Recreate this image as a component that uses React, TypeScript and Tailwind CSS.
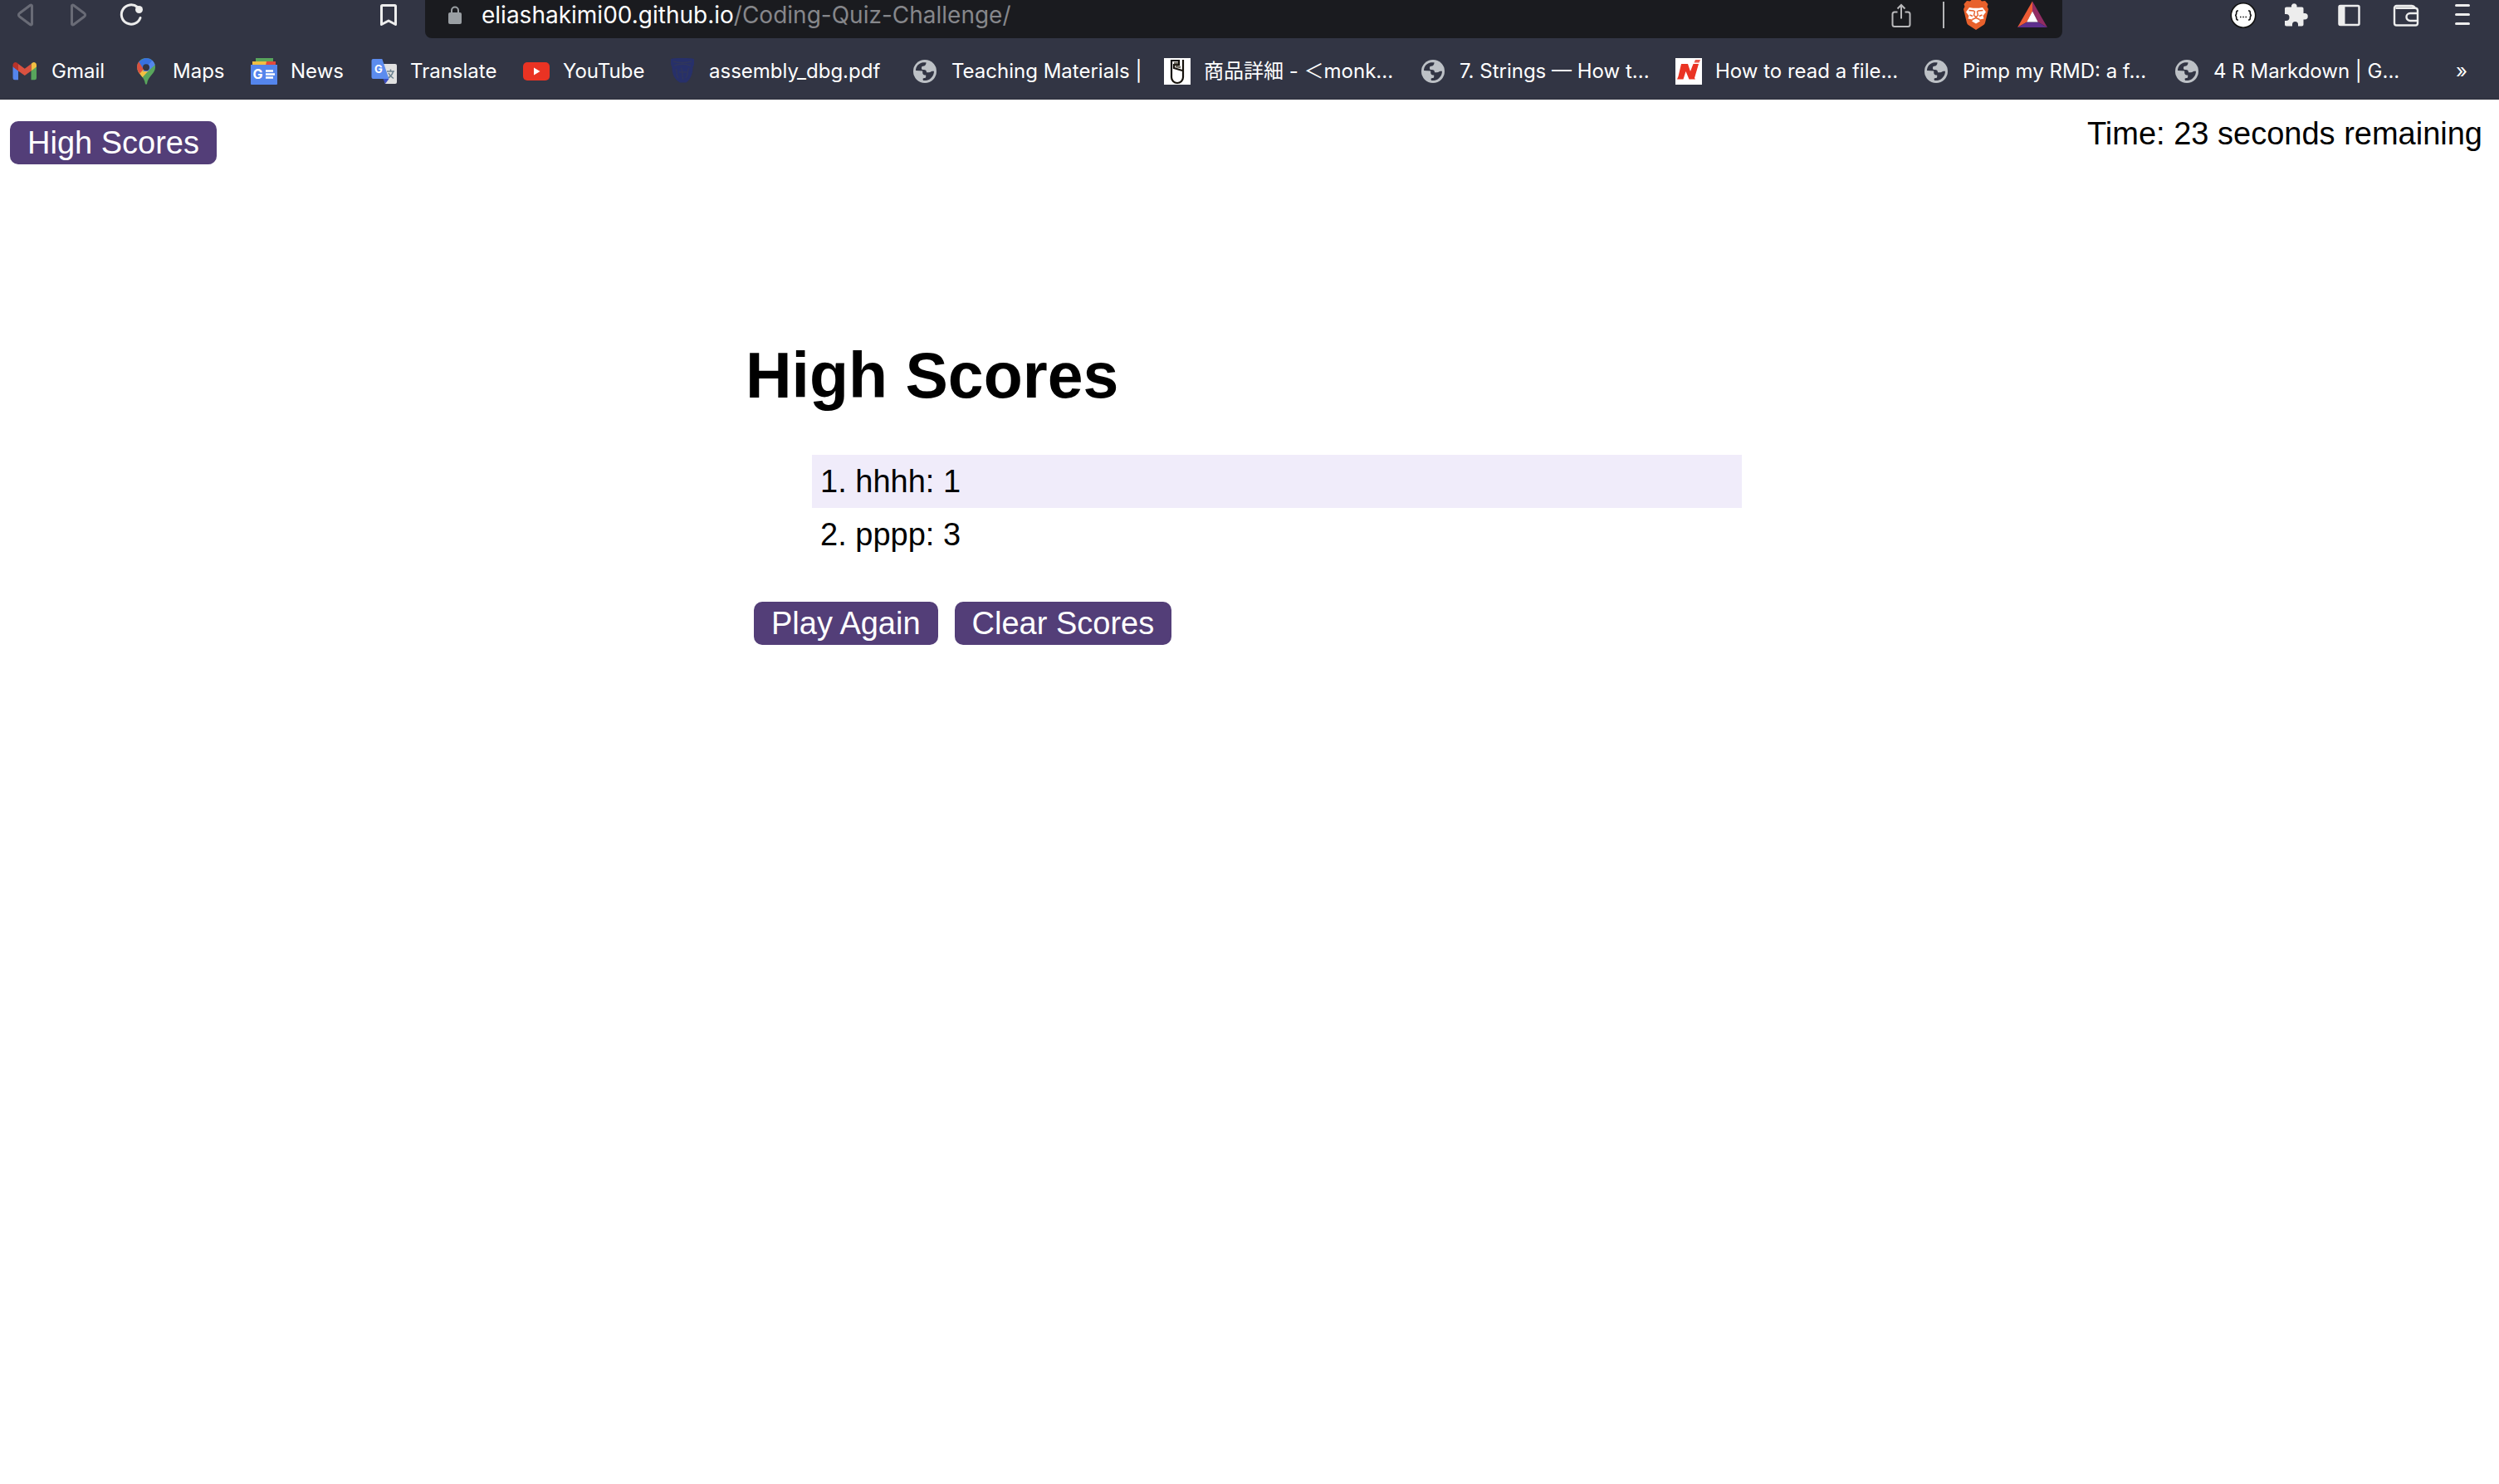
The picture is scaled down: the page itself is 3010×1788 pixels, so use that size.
import type { ReactNode } from "react";

type IconProps = { children: ReactNode; className?: string };

/** 32x36 drawing area used by every icon of the address row. */
function BarIcon({ children, className = "w-8" }: IconProps) {
  return (
    <svg viewBox="0 0 32 36" className={`h-9 shrink-0 ${className}`} fill="none" aria-hidden="true">
      {children}
    </svg>
  );
}

/** 32x32 favicon used by every bookmark. */
function Favicon({ children }: { children: ReactNode }) {
  return (
    <svg viewBox="0 0 32 32" className="size-8 shrink-0" fill="none" aria-hidden="true">
      {children}
    </svg>
  );
}

const gmail = (
  <Favicon>
    <path d="M1.500 10v14a2.300 2.300 0 0 0 2.300 2.300H8V14.500z" fill="#5485ec" />
    <path d="M30 10v14a2.300 2.300 0 0 1-2.300 2.300H23.500V14.500z" fill="#58a55c" />
    <path d="M23.500 7v8.500L30 10.500V8.500c0-3-3-4.500-5.200-2.800z" fill="#f1bf42" />
    <path d="M8 15.500V7l7.800 5.800L23.500 7v8.500L15.800 21z" fill="#d95140" />
    <path d="M1.500 8.500v2L8 15.500V7L6.700 5.700C4.500 4 1.500 5.500 1.500 8.500z" fill="#b8332a" />
  </Favicon>
);

const maps = (
  <Favicon>
    <clipPath id="pin">
      <path d="M16 0a11 11 0 0 1 11 11c0 8-8.500 10-10 20-.3 1-1.700 1-2 0C13.500 21 5 19 5 11A11 11 0 0 1 16 0z" />
    </clipPath>
    <g clipPath="url(#pin)">
      <path d="M0 0h32v32H0z" fill="#58a55c" />
      <path d="M4 18 16 7l4 7-11 12z" fill="#f1bf42" />
      <path d="M3 17V5l5-2 8 7-8 9z" fill="#d95140" />
      <path d="M7 4 14 0h14v4L12 12z" fill="#3871e0" />
      <path d="M24 2 12 16l6 0 10-9z" fill="#5485ec" />
    </g>
    <circle cx="16" cy="11.300" r="4" fill="#323544" />
  </Favicon>
);

const news = (
  <Favicon>
    <path d="M6 0h21v5H6z" fill="#58a55c" />
    <path d="M2 4h17v5H2z" fill="#f1bf42" />
    <path d="M19 4h11v5H18z" fill="#e04a3c" />
    <path d="M0 8h32v23a1 1 0 0 1-1 1H1a1 1 0 0 1-1-1z" fill="#5485ec" />
    <text x="2.500" y="25" fontSize="16" fontWeight="700" fill="#fff" fontFamily="Inter, sans-serif">
      G
    </text>
    <path d="M18 15.500h9M18 19.500h11M18 23.500h9" stroke="#fff" strokeWidth="2.400" />
  </Favicon>
);

const translate = (
  <Favicon>
    <path d="M12 7h18a2 2 0 0 1 2 2v20a2 2 0 0 1-2 2H18z" fill="#e1e1e1" />
    <path d="M20 16h9M24.500 13.500V16M27.500 16c-.8 4-4 7-7 8.500M22 18c1 2.500 3 4.500 6 6.500" stroke="#6d8390" strokeWidth="1.500" />
    <path d="M15.500 25h7L18 31z" fill="#3a4cc0" />
    <path d="M3.500 1h10.800L22.500 25H3.500a2 2 0 0 1-2-2V3a2 2 0 0 1 2-2z" fill="#5c8cee" />
    <text x="5" y="18" fontSize="13" fontWeight="700" fill="#fff" fontFamily="Inter, sans-serif">
      G
    </text>
  </Favicon>
);

const youtube = (
  <Favicon>
    <rect x="0" y="5" width="32" height="22" rx="5" fill="#ea3323" />
    <path d="m13 11.500 7.500 4.500-7.500 4.500z" fill="#fff" />
  </Favicon>
);

const crest = (
  <Favicon>
    <path
      d="M2 1c4-1.500 24-1.500 28 0v6c0 2-1.500 3-1.500 5 0 8-4 15-8 17.500H13C7 26 3.500 20 3.500 12 3.500 10 2 9 2 7z"
      fill="#27306a"
    />
    <path
      d="M5 4c6 2 16 2 22 0M6 9c6-2 14-2 20 0M8 13c3 5-1 6 3 11M14 12c3 2 1 8 3 14M24 12c-3 3 0 7-4 12M12 17h9"
      stroke="#30365c"
      strokeWidth="1.500"
    />
  </Favicon>
);

const globe = (
  <Favicon>
    <circle cx="16" cy="16" r="14" fill="#bdc1c6" />
    <path
      d="M5 15C5 10 8.500 6 13.500 5.200H17.500C17.800 8 16 9.500 13.500 9.800 12.200 10 12 11 12 12.500 12 13.500 13 14 14.500 14c2.500 0 3.500 1 3.500 3.200h3c1.500 0 2-1 3.500-1.500H27c0 5.500-4 10.300-9.500 11.300h-3.500l-.500-1.800c.2-1 1.500-1.200 2.500-1.200 1 0 1.200-1 1.200-2v-1.500c-2.200 0-4-.5-4-3V15.500z"
      fill="#323544"
    />
  </Favicon>
);

const monkey = (
  <Favicon>
    <path d="M0 0h32v32H0z" fill="#fff" />
    <path d="M9 2v21a7 7 0 0 0 14 0V2" stroke="#15110a" strokeWidth="2.200" />
    <path d="M8 3h10v5h-6v4l10 3" stroke="#15110a" strokeWidth="2.200" />
    <path d="M12 6h5M14 10l6 1" stroke="#6b675c" strokeWidth="2.500" />
  </Favicon>
);

const redN = (
  <Favicon>
    <path d="M0 0h32v32H0z" fill="#fff" />
    <path d="M7 7h8l3 9 3.500-9H28l-5 17 1 1.500h-7.500L12.500 16 9.500 25.500H2L3.500 22z" fill="#ea3323" />
    <path d="M24 2h6l-1.500 3.500h-6z" fill="#ea5a4c" />
  </Favicon>
);

const bookmarks = [
  { label: "Gmail", icon: gmail, width: "w-[146px]" },
  { label: "Maps", icon: maps, width: "w-[142px]" },
  { label: "News", icon: news, width: "w-[144px]" },
  { label: "Translate", icon: translate, width: "w-[184px]" },
  { label: "YouTube", icon: youtube, width: "w-[176px]" },
  { label: "assembly_dbg.pdf", icon: crest, width: "w-[292px]" },
  { label: "Teaching Materials |", icon: globe, width: "w-[304px]" },
  { label: "商品詳細 - ＜monk...", icon: monkey, width: "w-[308px]" },
  { label: "7. Strings — How t...", icon: globe, width: "w-[308px]" },
  { label: "How to read a file...", icon: redN, width: "w-[298px]" },
  { label: "Pimp my RMD: a f...", icon: globe, width: "w-[302px]" },
  { label: "4 R Markdown | G...", icon: globe, width: "w-[302px]" },
];

function AddressRow() {
  return (
    <div className="flex h-[46px] items-start">
      <div className="flex w-[512px] shrink-0 items-start pr-7 pl-[14px]">
        <button type="button" aria-label="Back" className="mr-8">
          <BarIcon>
            <path d="M24.500 7v22a1.200 1.200 0 0 1-2 .7L9.500 20a2.400 2.400 0 0 1 0-4L22.500 6.300a1.200 1.200 0 0 1 2 .7z" stroke="#696b76" strokeWidth="3" />
          </BarIcon>
        </button>
        <button type="button" aria-label="Forward" className="mr-8">
          <BarIcon>
            <path d="M8.500 7v22a1.200 1.200 0 0 0 2 .7L23.500 20a2.400 2.400 0 0 0 0-4L10.500 6.300a1.200 1.200 0 0 0-2 .7z" stroke="#696b76" strokeWidth="3" />
          </BarIcon>
        </button>
        <button type="button" aria-label="Reload">
          <BarIcon>
            <path d="M23.500 8.500A11.700 11.700 0 1 0 27 21.500" stroke="#ededed" strokeWidth="3" strokeLinecap="round" />
            <circle cx="25.500" cy="11.500" r="4.500" fill="#ededed" />
          </BarIcon>
        </button>
        <button type="button" aria-label="Bookmark this page" className="ml-auto">
          <BarIcon>
            <path d="M7.500 7.500a1 1 0 0 1 1-1h15a1 1 0 0 1 1 1v22L16 25l-8.500 4.500z" stroke="#ededed" strokeWidth="3" strokeLinejoin="round" />
          </BarIcon>
        </button>
      </div>

      <div className="flex h-full min-w-0 flex-1 items-start rounded-b-lg bg-[#1a1b1f] pr-[18px] pl-7">
        <svg viewBox="0 0 16 36" className="h-9 w-4 shrink-0" fill="none" aria-hidden="true">
          <path d="M4 16v-3.500a4 4 0 0 1 8 0V16" stroke="#9a9fa3" strokeWidth="2" />
          <rect x="0" y="15" width="16" height="14" rx="2" fill="#9a9fa3" />
        </svg>
        <div className="ml-6 flex-1 text-[28px] leading-9 whitespace-nowrap text-[#86878b]">
          <span className="text-white">eliashakimi00.github.io</span>
          /Coding-Quiz-Challenge/
        </div>
        <button type="button" aria-label="Share">
          <BarIcon>
            <path d="M11.500 14.500H8a2.500 2.500 0 0 0-2.500 2.500v12.500A2.500 2.500 0 0 0 8 32h16a2.500 2.500 0 0 0 2.500-2.500V17a2.500 2.500 0 0 0-2.500-2.500h-3.500M16 22.500V6M11.500 10.500 16 6l4.500 4.500" stroke="#b9b9bb" strokeWidth="2" />
          </BarIcon>
        </button>
        <div className="mt-0.5 mr-[22px] ml-[34px] h-8 w-0.5 bg-[#b4b5b7]" />
        <button type="button" aria-label="Shields">
          <BarIcon>
            <path d="M9 1.500 11.500-1h9L23 1.500l4-.5 3.500 4-1 3 1.500 3-4 16.500c-.5 1.500-1.500 2.500-2.500 3L16 36l-8.500-5.500c-1-.5-2-1.500-2.500-3L1 11l1.500-3-1-3L5 1z" fill="#e8612c" />
            <path d="M8 9l4.500.8H19.500L24 9l4 5.500-3.500 4.500 1 3.500-5 1-1 .5 1.500 1.500L16 28.500 11 25.500 12.500 24l-1-.5-5-1 1-3.500L4 14.500z" fill="#fff" />
            <path
              d="M7.500 12.500 13 13l1.500 1-1 4.500L16 20.500l2.500-2L17.500 14l1.500-1 5.500-.5M8.500 18l3.500 1.500M23.500 18 20 19.500M11.500 23.500 16 21.500l4.500 2"
              stroke="#e8612c"
              strokeWidth="1.400"
            />
          </BarIcon>
        </button>
        <button type="button" aria-label="Rewards" className="ml-[34px]">
          <svg viewBox="0 0 36 36" className="size-9" fill="none" aria-hidden="true">
            <path d="M18 1.500v12L11.500 26.500 0 33z" fill="#ec5b34" />
            <path d="M18 1.500v12l6.500 13L36 33z" fill="#922d63" />
            <path d="m0 33 11.500-6.500h13L36 33z" fill="#5e2f8c" />
            <path d="m18 13.500 6.700 13H11.300z" fill="#fff" />
          </svg>
        </button>
      </div>

      <div className="flex w-[526px] shrink-0 items-start justify-end pr-7">
        <button type="button" aria-label="JSON viewer" className="mr-8">
          <BarIcon>
            <circle cx="16" cy="18.500" r="14.700" fill="#fff" stroke="#111" strokeWidth="1.600" />
            <path
              d="M10 13H9c-1.300 0-1.300 1-1.300 2.500S7.500 18.500 6 18.500c1.500 0 1.700 1.500 1.700 3S7.700 24 9 24h1M22 13h1c1.300 0 1.300 1 1.300 2.500s.2 3 1.700 3c-1.500 0-1.700 1.500-1.700 3s0 2.500-1.300 2.500h-1"
              stroke="#111"
              strokeWidth="1.600"
            />
            <path d="M12 20.500h1.500M15.300 20.500h1.500M18.500 20.500H20" stroke="#111" strokeWidth="1.500" />
          </BarIcon>
        </button>
        <button type="button" aria-label="Extensions" className="mr-8">
          <BarIcon>
            <path
              d="M10 8.500V6.500a3.500 3.500 0 0 1 6.500 0v2h6c1.300 0 2 .7 2 2V16h1.500a3.500 3.500 0 0 1 0 7.500h-1.500v6c0 1.300-.7 2-2 2h-4.500v-2a3.500 3.500 0 0 0-7 0v2H4c-1.300 0-2-.7-2-2V25h1.500a3.700 3.700 0 0 0 0-8H2v-6.500c0-1.300.7-2 2-2z"
              fill="#ededed"
            />
          </BarIcon>
        </button>
        <button type="button" aria-label="Sidebar" className="mr-9">
          <BarIcon>
            <rect x="3.500" y="7" width="24" height="23" rx="1.500" stroke="#ededed" strokeWidth="2.500" />
            <path d="M3 6.500h7.500v24H3z" fill="#ededed" />
          </BarIcon>
        </button>
        <button type="button" aria-label="Wallet" className="mr-9">
          <BarIcon>
            <path
              d="M30 16v-3.500a3 3 0 0 0-3-2.800H3.500M27 9.500C26 8 25 7 23 7H4.500A2.500 2.500 0 0 0 2 9.500V28a2.500 2.500 0 0 0 2.500 2.500h23A2.500 2.500 0 0 0 30 28V16h-9a4.500 4.500 0 0 0 0 9h9"
              stroke="#ededed"
              strokeWidth="2.400"
              strokeLinejoin="round"
            />
          </BarIcon>
        </button>
        <button type="button" aria-label="Menu">
          <BarIcon>
            <path d="M8.500 6.500h15M8.500 17.500h15M8.500 28.500h15" stroke="#ededed" strokeWidth="3" strokeLinecap="round" />
          </BarIcon>
        </button>
      </div>
    </div>
  );
}

function BookmarksBar() {
  return (
    <nav aria-label="Bookmarks" className="flex h-[73px] items-center pt-[7px] pr-[38px] pl-[14px]">
      {bookmarks.map(({ label, icon, width }) => (
        <a key={label} href="#" className={`flex shrink-0 items-center gap-4 whitespace-nowrap ${width}`}>
          {icon}
          {label}
        </a>
      ))}
      <button type="button" aria-label="More bookmarks" className="ml-auto">
        »
      </button>
    </nav>
  );
}

function PurpleButton({ children }: { children: ReactNode }) {
  return (
    <button
      type="button"
      className="h-[52px] rounded-[10px] bg-[#533e78] px-[21px] leading-[52px] whitespace-nowrap text-white"
    >
      {children}
    </button>
  );
}

const scores = [
  { name: "hhhh", score: 1 },
  { name: "pppp", score: 3 },
];

export default function App() {
  return (
    <div className="min-h-screen bg-white">
      <header className="border-b border-[#2c2e3b] bg-[#323544] font-['Inter','Noto_Sans_CJK_JP',sans-serif] text-[24px] leading-8 text-white">
        <AddressRow />
        <BookmarksBar />
      </header>

      <div className="font-['Liberation_Sans',Arial,sans-serif] text-[38px] leading-[46px] text-black">
        <div className="flex items-start justify-between pt-[18px] pr-5 pl-3">
          <div className="pt-2">
            <PurpleButton>High Scores</PurpleButton>
          </div>
          <p>Time: 23 seconds remaining</p>
        </div>

        <div className="pr-[14px]">
          <main className="mx-auto mt-[208px] max-w-[1200px]">
            <h1 className="text-[77px] leading-[92px] font-bold">High Scores</h1>
            <ol className="mt-[50px] list-inside list-decimal pl-20">
              {scores.map(({ name, score }) => (
                <li key={name} className="h-16 px-[10px] py-[9px] odd:bg-[#f0ecfa]">
                  {name}: {score}
                </li>
              ))}
            </ol>
            <div className="mt-[49px] flex gap-5 pl-[10px]">
              <PurpleButton>Play Again</PurpleButton>
              <PurpleButton>Clear Scores</PurpleButton>
            </div>
          </main>
        </div>
      </div>
    </div>
  );
}
